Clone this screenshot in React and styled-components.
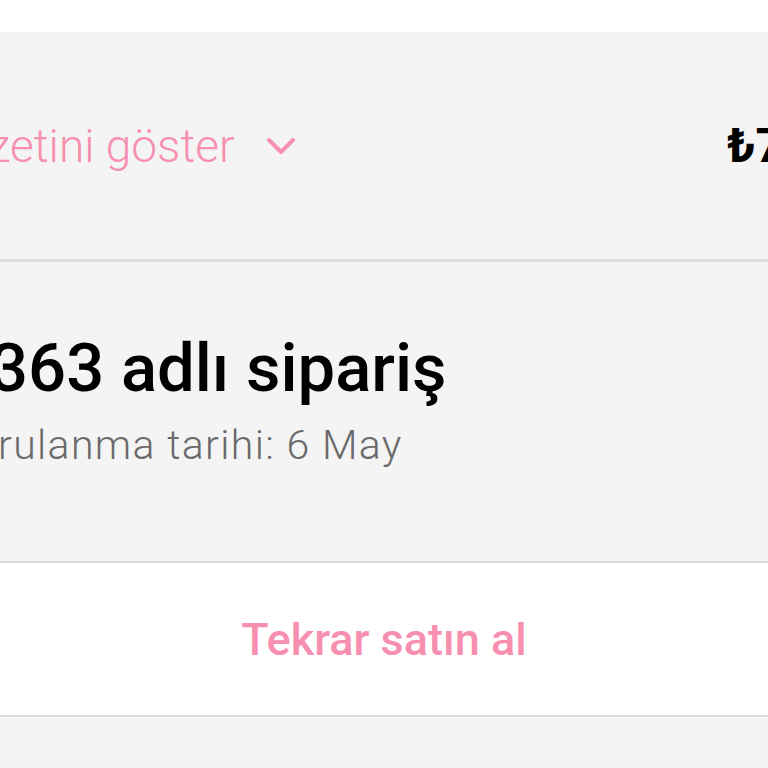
import React from 'react'
import styled, { createGlobalStyle } from 'styled-components'

const GlobalStyle = createGlobalStyle`
  html, body {
    margin: 0;
    padding: 0;
    background: #ffffff;
    font-family: Roboto, "Liberation Sans", sans-serif;
  }
`

const PINK = '#f78fb1'

const Page = styled.div`
  width: 768px;
  height: 768px;
  overflow: hidden;
  display: flex;
  flex-direction: column;
  background: #f4f4f4;
`

const TopGap = styled.div`
  height: 32px;
  background: #ffffff;
  flex-shrink: 0;
`

const SummaryRow = styled.div`
  height: 227px;
  flex-shrink: 0;
  display: grid;
  grid-template-columns: 727px 1fr;
  align-items: center;
  border-bottom: 3px solid #dbdbdb;
  overflow: hidden;
`

const Toggle = styled.button`
  display: flex;
  align-items: center;
  gap: 32px;
  margin-left: ${({ shift }) => shift}px;
  padding: 0;
  border: 0;
  background: none;
  color: ${PINK};
  font-family: inherit;
  font-size: 46px;
  font-weight: 300;
  white-space: nowrap;
  cursor: pointer;
`

const Price = styled.div`
  font-size: 48px;
  font-weight: 700;
  color: #000;
  white-space: nowrap;
`

const OrderBlock = styled.div`
  height: 233px;
  flex-shrink: 0;
  padding-top: 66px;
  border-bottom: 2px solid #dbdbdb;
  overflow: hidden;
`

const Title = styled.h2`
  margin: 0 0 13px ${({ shift }) => shift}px;
  font-size: 67px;
  line-height: 80px;
  font-weight: 500;
  color: #000;
  white-space: nowrap;
`

const DateLine = styled.div`
  margin-left: ${({ shift }) => shift}px;
  font-size: 41px;
  line-height: 48px;
  font-weight: 300;
  letter-spacing: 1.35px;
  color: #6a6a6a;
  white-space: nowrap;
`

const ActionRow = styled.div`
  height: 152px;
  flex-shrink: 0;
  display: flex;
  align-items: center;
  justify-content: center;
  background: #ffffff;
  border-bottom: 2px solid #dbdbdb;
`

const ActionButton = styled.button`
  border: 0;
  background: none;
  padding: 0;
  color: ${PINK};
  font-family: inherit;
  font-size: 45px;
  font-weight: 500;
  cursor: pointer;
`

const Chevron = () => (
  <svg width="28" height="18" viewBox="0 0 28 18" fill="none">
    <path d="M2 3 L14 15 L26 3" stroke={PINK} strokeWidth="4" strokeLinecap="round" strokeLinejoin="round" />
  </svg>
)

export default function App() {
  return (
    <>
      <GlobalStyle />
      <Page>
        <TopGap />
        <SummaryRow>
          <Toggle shift={-12}>
            <span>zetini göster</span>
            <Chevron />
          </Toggle>
          <Price>₺749,90</Price>
        </SummaryRow>
        <OrderBlock>
          <Title shift={-10}>363 adlı sipariş</Title>
          <DateLine shift={-2}>rulanma tarihi: 6 May</DateLine>
        </OrderBlock>
        <ActionRow>
          <ActionButton>Tekrar satın al</ActionButton>
        </ActionRow>
      </Page>
    </>
  )
}
